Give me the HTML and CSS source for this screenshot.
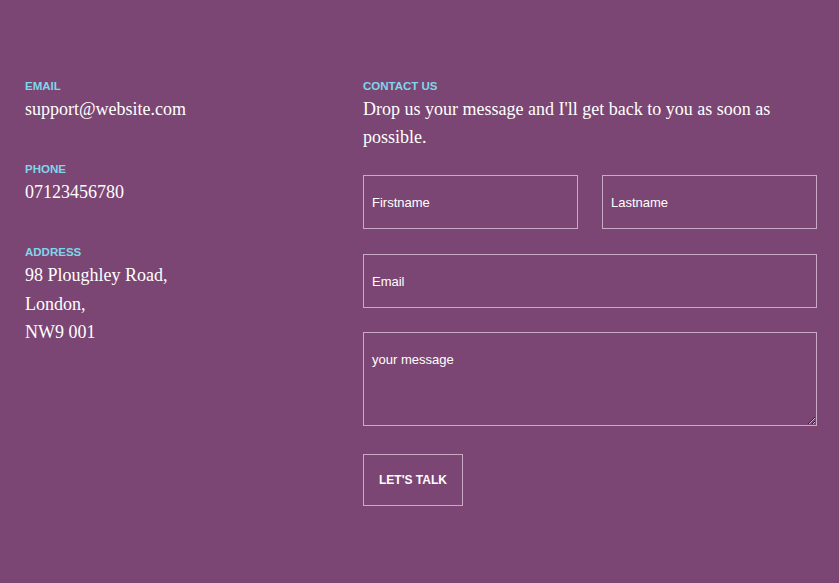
FILE: index.html
```html
<!DOCTYPE html>
<html>
<head>
<meta charset="utf-8">
<link rel="stylesheet" href="styles.css">
</head>
<body>
<div class="page">
  <div class="info">
    <div class="item">
      <div class="label">EMAIL</div>
      <div class="value">support@website.com</div>
    </div>
    <div class="item">
      <div class="label">PHONE</div>
      <div class="value">07123456780</div>
    </div>
    <div class="item">
      <div class="label">ADDRESS</div>
      <div class="value">98 Ploughley Road,<br>London,<br>NW9 001</div>
    </div>
  </div>
  <div class="contact">
    <div class="label">CONTACT US</div>
    <p class="intro">Drop us your message and I'll get back to you as soon as possible.</p>
    <form class="form">
      <div class="row">
        <input class="field" type="text" placeholder="Firstname">
        <input class="field" type="text" placeholder="Lastname">
      </div>
      <input class="field" type="text" placeholder="Email">
      <textarea class="field area" placeholder="your message"></textarea>
      <div><button class="btn" type="button">LET'S TALK</button></div>
    </form>
  </div>
</div>
</body>
</html>
```
FILE: styles.css
```css
html, body {
  margin: 0;
  padding: 0;
  background: #7b4673;
  height: 100%;
}
body {
  color: #fff;
  font-family: "Liberation Serif", serif;
}
.page {
  display: grid;
  grid-template-columns: 338px 454px;
  padding: 79px 22px 0 25px;
}
.label {
  font-family: "Liberation Sans", Arial, sans-serif;
  font-weight: bold;
  font-size: 11.5px;
  line-height: 14px;
  color: #7fd6ea;
}
.value {
  font-size: 18px;
  line-height: 28.5px;
  padding-top: 2px;
}
.item {
  margin-bottom: 38.5px;
}
.intro {
  margin: 0;
  padding-top: 2px;
  font-size: 18px;
  line-height: 28px;
}
.form {
  display: flex;
  flex-direction: column;
  margin-top: 24px;
}
.row {
  display: flex;
  gap: 24px;
  margin-bottom: 25px;
}
.field {
  box-sizing: border-box;
  width: 100%;
  height: 54px;
  background: transparent;
  border: 1px solid #c9a9c4;
  padding: 0 8px;
  color: #fff;
  font-family: "Liberation Sans", Arial, sans-serif;
  font-size: 13px;
  outline: none;
  margin: 0;
}
.field::placeholder {
  color: #fff;
  opacity: 1;
}
.row .field {
  width: 216px;
}
.area {
  height: 94px;
  margin-top: 24px;
  padding: 19px 8px;
  resize: vertical;
  display: block;
}
.btn {
  margin-top: 28px;
  width: 100px;
  height: 52px;
  background: transparent;
  border: 1px solid #c9a9c4;
  color: #fff;
  font-family: "Liberation Sans", Arial, sans-serif;
  font-weight: bold;
  font-size: 12px;
  cursor: pointer;
  display: block;
}
```
